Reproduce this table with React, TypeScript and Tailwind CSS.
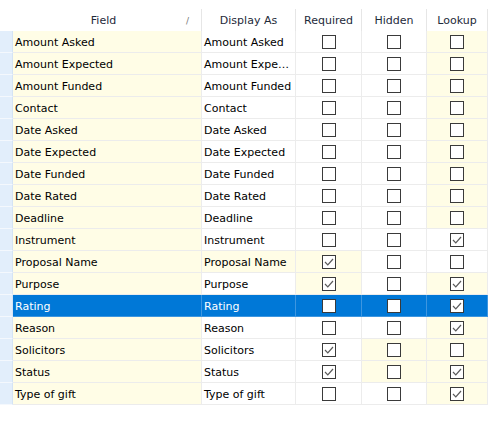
import React from "react";

type Row = {
  field: string;
  display: string;
  req: boolean;
  hid: boolean;
  look: boolean;
  yDisp?: boolean;
  yReq?: boolean;
  yHid?: boolean;
  yLook?: boolean;
  sel?: boolean;
};

const rows: Row[] = [
  { field: "Amount Asked", display: "Amount Asked", req: false, hid: false, look: false, yLook: true },
  { field: "Amount Expected", display: "Amount Expe\u2026", req: false, hid: false, look: false, yLook: true },
  { field: "Amount Funded", display: "Amount Funded", req: false, hid: false, look: false, yLook: true },
  { field: "Contact", display: "Contact", req: false, hid: false, look: false, yLook: true },
  { field: "Date Asked", display: "Date Asked", req: false, hid: false, look: false, yLook: true },
  { field: "Date Expected", display: "Date Expected", req: false, hid: false, look: false, yLook: true },
  { field: "Date Funded", display: "Date Funded", req: false, hid: false, look: false, yLook: true },
  { field: "Date Rated", display: "Date Rated", req: false, hid: false, look: false, yLook: true },
  { field: "Deadline", display: "Deadline", req: false, hid: false, look: false, yLook: true },
  { field: "Instrument", display: "Instrument", req: false, hid: false, look: true },
  { field: "Proposal Name", display: "Proposal Name", req: true, hid: false, look: false, yDisp: true, yReq: true },
  { field: "Purpose", display: "Purpose", req: true, hid: false, look: true, yReq: true, yLook: true },
  { field: "Rating", display: "Rating", req: false, hid: false, look: true, sel: true },
  { field: "Reason", display: "Reason", req: false, hid: false, look: true, yLook: true },
  { field: "Solicitors", display: "Solicitors", req: true, hid: false, look: false, yHid: true, yLook: true },
  { field: "Status", display: "Status", req: true, hid: false, look: true, yHid: true, yLook: true },
  { field: "Type of gift", display: "Type of gift", req: false, hid: false, look: true, yLook: true },
];

function Box({ checked }: { checked: boolean }) {
  return (
    <div className="w-[14px] h-[14px] border border-[#3a3a3a] bg-white flex items-center justify-center">
      {checked && (
        <svg width="12" height="12" viewBox="0 0 12 12">
          <polyline points="2,6 4.8,8.8 10,3" fill="none" stroke="#5a5a5a" strokeWidth="1.2" />
        </svg>
      )}
    </div>
  );
}

export default function App() {
  const font = { fontFamily: '"DejaVu Sans", sans-serif' };
  return (
    <div className="w-[500px] h-[427px] bg-white text-[11px] text-black" style={font}>
      <div className="pt-[9px]">
        {/* header */}
        <div className="flex h-[22px] text-[#1e2a3a]">
          <div className="w-[13px]" />
          <div className="w-[189px] border-r border-[#e6e6e6] flex items-center relative pt-[3px]">
            <div className="flex-1 text-center pr-[7px]">Field</div>
            <span className="absolute left-[173px] top-[6px] text-[9px] text-[#777]">/</span>
          </div>
          <div className="w-[94px] border-r border-[#e6e6e6] flex items-center justify-center pt-[3px]">Display As</div>
          <div className="w-[66px] border-r border-[#e6e6e6] flex items-center justify-center pt-[3px]">Required</div>
          <div className="w-[65px] border-r border-[#e6e6e6] flex items-center justify-center pt-[3px]">Hidden</div>
          <div className="w-[61px] border-r border-[#e6e6e6] flex items-center justify-center pt-[3px]">Lookup</div>
        </div>
        {rows.map((r) => {
          const line = r.sel ? "border-[#3d96e0]" : "border-[#ececec]";
          const bg = (y?: boolean) => (r.sel ? "bg-[#0078d7]" : y ? "bg-[#fffde6]" : "bg-white");
          return (
            <div key={r.field} className={`flex h-[22px] ${r.sel ? "text-white" : "text-black"}`}>
              <div className="w-[13px] bg-[#e2eefb] border-r border-b border-r-[#d4e3f5] border-b-[#f4f8fd]" />
              <div className={`w-[189px] border-r border-b ${line} ${r.sel ? "bg-[#0078d7]" : "bg-[#fffde6]"} flex items-center pl-[2px] pt-[3px] whitespace-nowrap overflow-hidden`}>
                {r.field}
              </div>
              <div className={`w-[94px] border-r border-b ${line} ${bg(r.yDisp)} flex items-center pl-[2px] pt-[3px] whitespace-nowrap overflow-hidden`}>
                {r.display}
              </div>
              <div className={`w-[66px] border-r border-b ${line} ${bg(r.yReq)} flex items-center justify-center pl-[1px] pt-[1px]`}>
                <Box checked={r.req} />
              </div>
              <div className={`w-[65px] border-r border-b ${line} ${bg(r.yHid)} flex items-center justify-center pt-[1px]`}>
                <Box checked={r.hid} />
              </div>
              <div className={`w-[61px] border-r border-b ${line} ${bg(r.yLook)} flex items-center justify-center pt-[1px]`}>
                <Box checked={r.look} />
              </div>
            </div>
          );
        })}
      </div>
    </div>
  );
}
